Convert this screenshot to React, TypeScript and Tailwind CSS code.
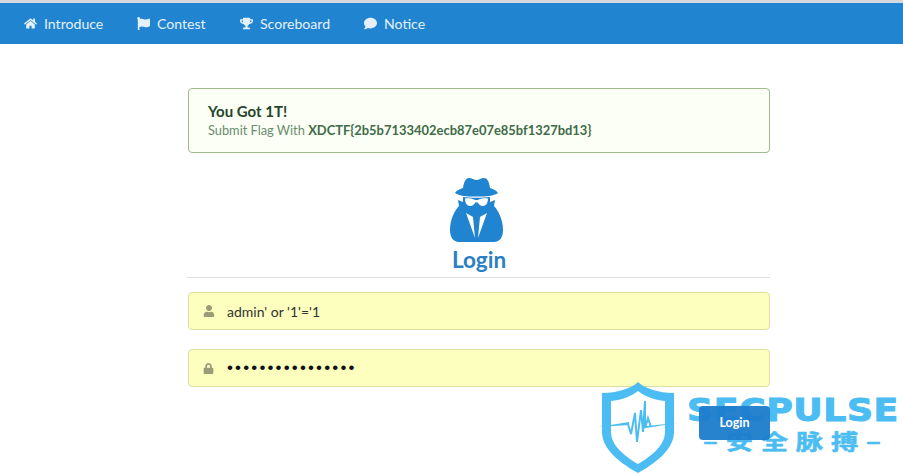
import React from "react";
import { FaComment, FaFlag, FaHome, FaLock, FaTrophy, FaUser } from "react-icons/fa";

const links = [
  { id: 1, label: "Introduce", icon: FaHome, width: "w-[113px]" },
  { id: 2, label: "Contest", icon: FaFlag, width: "w-[103px]" },
  { id: 3, label: "Scoreboard", icon: FaTrophy, width: "w-[124px]" },
  { id: 4, label: "Notice", icon: FaComment, width: "w-[90px]" },
];

const SpyIcon = () => (
  <svg viewBox="0 0 53 64" className="w-[53px] h-[64px]" fill="#2184d0">
    {/* hat */}
    <path d="M13 10 C14 3 16 0 19 0 C22 0 24 2 26.500 2 C29 2 31 0 34 0 C37 0 39 3 40 10 C44 11 47 13 48 15 C44 18 36 18.500 26.500 18.500 C17 18.500 9 18 5 15 C6 13 9 11 13 10 Z" />
    {/* coat */}
    <path d="M8 22 L13 24 L13 19 C20 20 33 20 40 19 L40 24 L45 22 L44 28 C48 32 53 41 53 52 C53 59 50 64 44 64 L9 64 C3 64 0 59 0 52 C0 41 5 32 9 28 Z" />
    {/* glasses */}
    <path d="M15 20.500 C19 20 23 20.500 25 22 L28 22 C30 20.500 34 20 38 20.500 C38 25 36 28 33 28 C30 28 28.500 26 27.800 24.500 L25.200 24.500 C24.500 26 23 28 20 28 C17 28 15 25 15 20.500 Z" fill="#ffffff" />
    {/* lapels */}
    <path d="M16 35 L23 39 L25 60 Z M37 35 L30 39 L28 60 Z" fill="#ffffff" />
  </svg>
);

const Watermark = () => (
  <div className="absolute left-[598px] top-[380px] w-[305px] h-[94px] pointer-events-none">
    <svg viewBox="0 0 84 94" className="w-[84px] h-[94px]">
      <path
        fillRule="evenodd"
        fill="#4cbdf2"
        d="M40 2 C46 8 60 13 76 13 L76 52 C76 70 56 84 40 93 C24 84 4 70 4 52 L4 13 C20 13 34 8 40 2 Z M40 11 C34 16 24 20 13 21 L13 52 C13 66 28 77 40 84 C52 77 67 66 67 52 L67 21 C56 20 46 16 40 11 Z"
      />
      <path d="M0 47 L31 42 L31 45 Z M48 46 L79 43 L48 48 Z" fill="#4cbdf2" />
      <path d="M30 44 L33 54 L37 33 L39 62 L43 30 L45 52 L47 21 L47 48 L50 38 L53 47" fill="none" stroke="#4cbdf2" strokeWidth="2" />
    </svg>
    <span className="absolute left-[89px] top-[13px] origin-left scale-x-[1.15] font-['DejaVu_Sans',sans-serif] font-bold text-[31.5px] leading-[34px] tracking-[0.5px] text-[#4cbdf2] [-webkit-text-stroke:1px_#4cbdf2] whitespace-nowrap">
      SECPULSE
    </span>
    <span className="absolute left-[105px] top-[45px] origin-left scale-x-[1.3] font-['Noto_Sans_CJK_SC',sans-serif] font-bold text-[21px] leading-[30px] tracking-[6px] text-[#4cbdf2] [-webkit-text-stroke:0.5px_#4cbdf2] whitespace-nowrap">
      –安全脉搏–
    </span>
  </div>
);

export default function App() {
  return (
    <div className="relative h-[474px] overflow-hidden bg-white font-['Lato',sans-serif]">
      <div className="h-[3px] bg-[#d5d8dc]" />
      <nav className="h-[41px] bg-[#2184d0] flex items-center pl-[24px]">
        {links.map((link) => (
          <a key={link.id} href="#" className={`${link.width} flex items-center gap-[7px] text-[14.1px] text-[#e4f0fa]`}>
            <link.icon size={13} />
            {link.label}
          </a>
        ))}
      </nav>

      <main className="w-[582px] ml-[188px] pt-[44px]">
        <div className="h-[65px] border border-[#9dbd8e] rounded-[4px] bg-[#fbfff5] pl-[19px] pt-[13px]">
          <h4 className="text-[15px] leading-[18px] font-bold text-[#24452a]">You Got 1T!</h4>
          <p className="text-[12.8px] leading-[20px] text-[#6a8d70]">
            Submit Flag With <b className="text-[12.95px] text-[#3f6b48]">XDCTF{"{"}2b5b7133402ecb87e07e85bf1327bd13{"}"}</b>
          </p>
        </div>

        <div className="mt-[25px] flex flex-col items-center">
          <div className="ml-[-5px]"><SpyIcon /></div>
          <h2 className="mt-[1px] text-[22.5px] leading-[34px] font-bold text-[#2b7fc3]">Login</h2>
        </div>
        <hr className="ml-[-1px] border-[#dcdde0]" />

        <div className="mt-[14px] h-[38px] border border-[#dcdfa0] rounded-[4px] bg-[#fcffbd] flex items-center">
          <FaUser size={12} className="ml-[14px] text-[#9a9c78]" />
          <span className="ml-[12px] text-[14px] text-[#333333]">admin' or '1'='1</span>
        </div>
        <div className="mt-[19px] h-[38px] border border-[#dcdfa0] rounded-[4px] bg-[#fcffbd] flex items-center">
          <FaLock size={11} className="ml-[14px] text-[#9a9c78]" />
          <span className="ml-[13px] text-[17px] tracking-[2.15px] text-[#111111] font-['Liberation_Sans',sans-serif]">••••••••••••••••</span>
        </div>

        <div className="mt-[19px] flex justify-end">
          <button className="relative z-10 w-[71px] h-[34px] rounded-[4px] bg-[#1c7ccc]/95 text-[12.5px] font-bold text-white">Login</button>
        </div>
      </main>

      <Watermark />
    </div>
  );
}
